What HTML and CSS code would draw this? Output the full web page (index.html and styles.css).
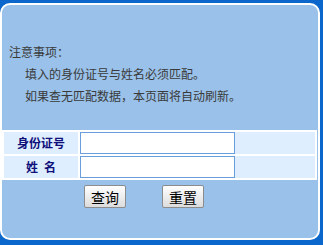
FILE: index.html
```html
<!DOCTYPE html>
<html lang="zh-CN">
<head>
<meta charset="utf-8">
<title>查询</title>
<link rel="stylesheet" href="styles.css">
</head>
<body>
<div class="panel">
  <div class="notes">
    <p class="note-title">注意事项：</p>
    <p class="note-line">填入的身份证号与姓名必须匹配。</p>
    <p class="note-line">如果查无匹配数据，本页面将自动刷新。</p>
  </div>
  <table class="form-table">
    <tr>
      <th class="label">身份证号</th>
      <td class="field"><input class="text-input" type="text"></td>
    </tr>
    <tr>
      <th class="label">姓&ensp;名</th>
      <td class="field"><input class="text-input" type="text"></td>
    </tr>
  </table>
  <div class="actions">
    <button class="btn" type="button">查询</button>
    <button class="btn" type="button">重置</button>
  </div>
</div>
</body>
</html>
```

FILE: styles.css
```css
html, body {
  margin: 0;
  padding: 0;
}
body {
  width: 323px;
  height: 245px;
  background: #0b67cc;
  font-family: "Noto Sans CJK SC", "Noto Sans", sans-serif;
  overflow: hidden;
}
.panel {
  box-sizing: border-box;
  height: 237px;
  margin: 3px 3px 5px 0;
  padding: 0 1px 0 0;
  border: 2px solid #ffffff;
  border-radius: 10px;
  background: #99c1e9;
}
.notes {
  padding: 36px 0 0 7px;
  color: #3a3a3a;
  font-size: 12px;
  line-height: 22px;
}
.notes p {
  margin: 0;
}
.note-line {
  padding-left: 16px;
}
.form-table {
  margin-top: 23px;
  width: 315px;
  border-collapse: separate;
  border-spacing: 2px;
  background: #ffffff;
}
.form-table th,
.form-table td {
  padding: 0;
  height: 22px;
  background: #deeeff;
}
.label {
  width: 74px;
  text-align: center;
  font-size: 12px;
  font-weight: bold;
  color: #10107a;
  line-height: 22px;
}
.field {
  vertical-align: top;
}
.text-input {
  display: block;
  box-sizing: border-box;
  width: 155px;
  height: 22px;
  margin: 0;
  border: 1px solid #6a9ddb;
  background: #ffffff;
  padding: 0 3px;
}
.actions {
  display: flex;
  gap: 36px;
  padding: 5px 0 0 82px;
}
.btn {
  box-sizing: border-box;
  width: 42px;
  height: 23px;
  padding: 0;
  border: 1px solid #8c8c8c;
  border-radius: 2px;
  background: linear-gradient(#ffffff, #dcdcdc);
  font-family: "Noto Sans CJK SC", sans-serif;
  font-size: 14px;
  line-height: 20px;
  color: #000000;
}
```
